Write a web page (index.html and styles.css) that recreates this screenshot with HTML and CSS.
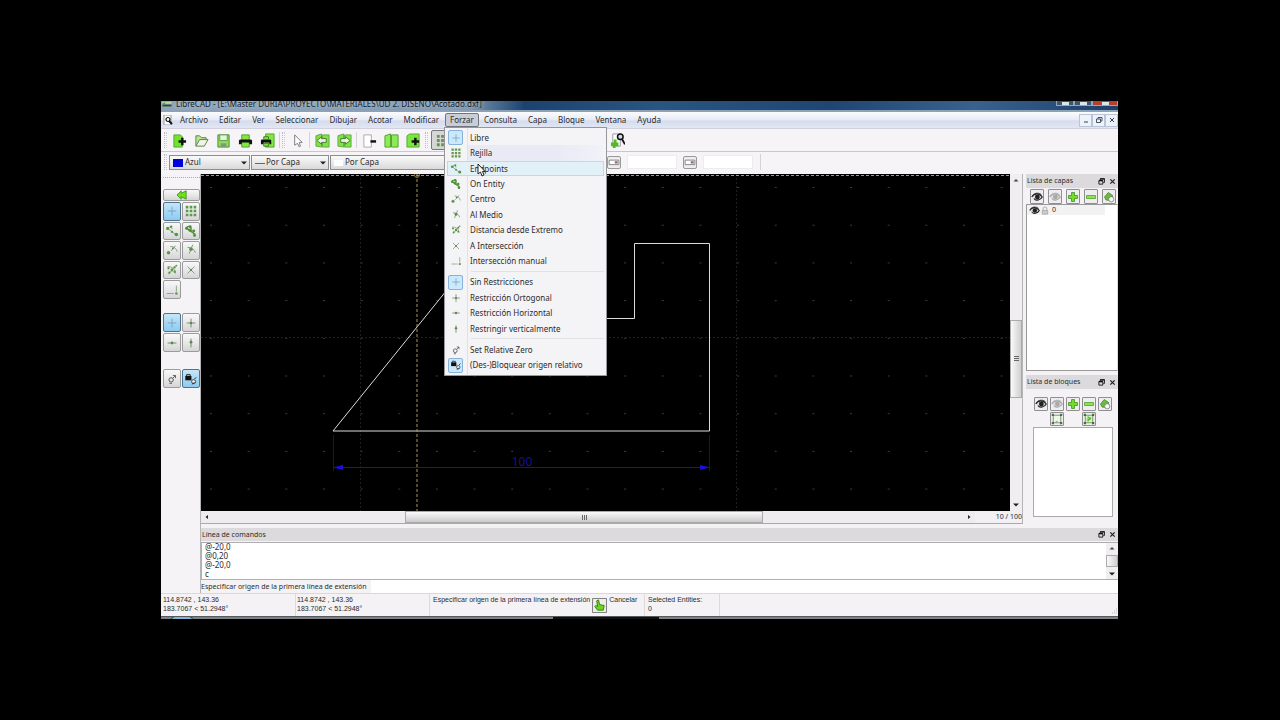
FILE: index.html
```html
<!DOCTYPE html>
<html lang="es">
<head>
<meta charset="utf-8">
<title>LibreCAD</title>
<link rel="stylesheet" href="styles.css">
</head>
<body>
<svg class="defs" aria-hidden="true">
  <symbol id="plus-blue" viewBox="0 0 16 16"><path d="M8 3v10M3 8h10" stroke="#6fa3c4" fill="none"/></symbol>
  <symbol id="grid" viewBox="0 0 16 16"><g fill="#5f9a4c"><path d="M2 2h3v3H2zM6.500 2h3v3h-3zM11 2h3v3h-3zM2 6.500h3v3H2zM6.500 6.500h3v3h-3zM11 6.500h3v3h-3zM2 11h3v3H2zM6.500 11h3v3h-3zM11 11h3v3h-3z"/></g></symbol>
  <symbol id="ends" viewBox="0 0 16 16"><path d="M3 5c3-3 5-1 5 1M3 5l9 7" stroke="#7d9a7a" fill="none"/><g fill="#4e9a3a"><circle cx="3" cy="5" r="1.800"/><circle cx="8" cy="9" r="1.300"/><circle cx="13" cy="12" r="2"/><circle cx="7" cy="3" r="1.400"/></g></symbol>
  <symbol id="entity" viewBox="0 0 16 16"><path d="M2 5c3-4 7-2 6 1M3 5l10 7" stroke="#5d7d55" stroke-width="1.500" fill="none"/><g fill="#4a9430"><circle cx="3" cy="5" r="1.700"/><circle cx="7" cy="7" r="1.900"/><circle cx="11" cy="8" r="1.700"/><circle cx="12" cy="13" r="1.700"/><circle cx="7" cy="3" r="1.700"/></g></symbol>
  <symbol id="center" viewBox="0 0 16 16"><path d="M6 4c5 0 7 3 8 6M7 9l5-6" stroke="#78936f" fill="none"/><circle cx="4" cy="11" r="2" fill="#5b9a43"/><circle cx="9" cy="6" r="1" fill="#557a48"/></symbol>
  <symbol id="middle" viewBox="0 0 16 16"><path d="M4 5c5 0 8 3 9 6M6 12l4-10" stroke="#72896b" fill="none"/><circle cx="8" cy="7" r="2" fill="#5b9444"/></symbol>
  <symbol id="dist" viewBox="0 0 16 16"><path d="M3 4c5 0 9 3 9 8M4 13l8-10" stroke="#809977" fill="none"/><g fill="#5b9444"><circle cx="4" cy="6" r="1.300"/><circle cx="8" cy="8" r="1.600"/><circle cx="5" cy="11" r="1.300"/><circle cx="11" cy="5" r="1.300"/><circle cx="11" cy="10" r="1.300"/><circle cx="13" cy="3" r="1"/></g></symbol>
  <symbol id="cross" viewBox="0 0 16 16"><path d="M4 4l8 8M12 4l-8 8" stroke="#80907b" fill="none"/><circle cx="8" cy="8" r="1.300" fill="#5b8a4a"/></symbol>
  <symbol id="manual" viewBox="0 0 16 16"><path d="M2 12h8M13 3v7" stroke="#8a9a86" fill="none"/><circle cx="13" cy="12" r="1.500" fill="#5f9a4c"/></symbol>
  <symbol id="ortho" viewBox="0 0 16 16"><path d="M8 3v10M3 8h10" stroke="#6c7f66" fill="none"/><circle cx="8" cy="8" r="1.400" fill="#5b8a4a"/></symbol>
  <symbol id="horiz" viewBox="0 0 16 16"><path d="M3 8h10" stroke="#6c7f66" fill="none"/><circle cx="8" cy="8" r="1.600" fill="#5b8a4a"/></symbol>
  <symbol id="vert" viewBox="0 0 16 16"><path d="M8 3v10" stroke="#6c7f66" fill="none"/><circle cx="8" cy="7" r="1.600" fill="#5b8a4a"/></symbol>
  <symbol id="zero" viewBox="0 0 16 16"><circle cx="7" cy="9" r="2.500" fill="none" stroke="#444"/><path d="M5 13h3M9 7l3-3M9 4h3v3" stroke="#555" fill="none"/></symbol>
  <symbol id="lock" viewBox="0 0 16 16"><path d="M3 5V3h4v2" stroke="#111" fill="none"/><path d="M1.500 4.500h7v5h-7z" fill="#111"/><circle cx="11" cy="11" r="2.300" fill="#e8f2f8" stroke="#333"/><path d="M12 8l2-2M9 14l3-2" stroke="#222"/></symbol>
  <symbol id="eye" viewBox="0 0 16 16"><path d="M1 8c3-5 10-6 14 0-2 4-9 6-11 2" fill="#ddd" stroke="currentColor" stroke-width="1.600"/><circle cx="8.500" cy="8" r="3.200" fill="currentColor"/><path d="M2 6c3-4 9-4 12-1" stroke="currentColor" fill="none"/></symbol>
  <symbol id="add" viewBox="0 0 16 16"><path d="M6 2h4v4h4v4h-4v4H6v-4H2V6h4z" fill="#74dd2c" stroke="#3d8b22"/></symbol>
  <symbol id="remove" viewBox="0 0 16 16"><path d="M2 6h12v4H2z" fill="#86e64a" stroke="#4f9a32"/></symbol>
  <symbol id="edit" viewBox="0 0 16 16"><path d="M2 8l5-6 6 4-2 7-7-1z" fill="#67bd3a" stroke="#4d7d3a"/><circle cx="11" cy="11" r="3.500" fill="#f6f6f6" stroke="#777"/></symbol>
  <symbol id="frame" viewBox="0 0 16 16"><path d="M3 3h10v10H3z" fill="#eef7e8" stroke="#557d4a"/><g fill="#4d6e43"><path d="M1 1h3v3H1zM12 1h3v3h-3zM1 12h3v3H1zM12 12h3v3h-3z"/></g><path d="M6 12l3-1" stroke="#777"/></symbol>
  <symbol id="frame-in" viewBox="0 0 16 16"><path d="M3 3h10v10H3z" fill="#d9f5c8" stroke="#557d4a"/><g fill="#3f7030"><path d="M1 1h3v3H1zM12 1h3v3h-3zM1 12h3v3H1zM12 12h3v3h-3z"/></g><path d="M5 8h6M6 5l4 2-4 4" stroke="#58b52b" stroke-width="1.600" fill="none"/></symbol>
  <symbol id="float" viewBox="0 0 8 8"><path d="M2.500 2.500V1h5v4H6M1 3h4.500v4H1z" fill="none" stroke="#111"/><path d="M1 3h4.500M2.500 1h5" stroke="#111" stroke-width="1.500"/></symbol>
  <symbol id="close" viewBox="0 0 8 8"><path d="M1.500 1.500l5 5M6.500 1.500l-5 5" stroke="#222" stroke-width="1.400"/></symbol>
  <symbol id="up" viewBox="0 0 8 8"><path d="M1.500 5.500L4 3l2.500 2.500z" fill="#444"/></symbol>
  <symbol id="down" viewBox="0 0 8 8"><path d="M1 2.500h6L4 5.500z" fill="#222"/></symbol>
  <symbol id="left" viewBox="0 0 8 8"><path d="M5 2v4L2.500 4z" fill="#222"/></symbol>
  <symbol id="right" viewBox="0 0 8 8"><path d="M3 2v4l2.500-2z" fill="#222"/></symbol>
  <symbol id="field" viewBox="0 0 16 16"><path d="M1.500 5.500h13v6h-13z" fill="#fff" stroke="#666"/><path d="M9 7h4v3H9z" fill="#9b6370"/></symbol>
</svg>

<div class="app">
  <header class="title">
    <svg class="logo" viewBox="0 0 12 10"><path d="M1 1h10v2H1z" fill="#b9df9f"/><path d="M1 4h10v2H1z" fill="#264d22"/><path d="M0 4l4-3v2z" fill="#4b9f2f"/></svg>
    <h1>LibreCAD - [E:\Master DURIA\PROYECTO\MATERIALES\UD 2. DISEÑO\Acotado.dxf]</h1>
    <div class="win"><button aria-label="Minimizar"><i></i></button><button aria-label="Maximizar"><i></i></button><button class="red" aria-label="Cerrar"><i></i></button></div>
  </header>

  <nav class="menubar">
    <svg class="doc" viewBox="0 0 10 10"><path d="M1 0h7v10H1z" fill="#fff" stroke="#999"/><circle cx="5" cy="4.500" r="2" fill="none" stroke="#111" stroke-width="1.200"/><path d="M6 6l3 3" stroke="#111" stroke-width="2"/></svg>
    <button>Archivo</button><button>Editar</button><button>Ver</button><button>Seleccionar</button><button>Dibujar</button><button>Acotar</button><button>Modificar</button>
    <div class="drop">
      <button class="open">Forzar</button>
      <div class="popup">
        <button><span class="on"><svg><use href="#plus-blue"/></svg></span>Libre</button>
        <button class="soft"><span><svg><use href="#grid"/></svg></span>Rejilla</button>
        <button class="hover"><span><svg><use href="#ends"/></svg></span>Endpoints</button>
        <button><span><svg><use href="#entity"/></svg></span>On Entity</button>
        <button><span><svg><use href="#center"/></svg></span>Centro</button>
        <button><span><svg><use href="#middle"/></svg></span>Al Medio</button>
        <button><span><svg><use href="#dist"/></svg></span>Distancia desde Extremo</button>
        <button><span><svg><use href="#cross"/></svg></span>A Intersección</button>
        <button><span><svg><use href="#manual"/></svg></span>Intersección manual</button>
        <hr>
        <button><span class="on"><svg><use href="#plus-blue"/></svg></span>Sin Restricciones</button>
        <button><span><svg><use href="#ortho"/></svg></span>Restricción Ortogonal</button>
        <button><span><svg><use href="#horiz"/></svg></span>Restricción Horizontal</button>
        <button><span><svg><use href="#vert"/></svg></span>Restringir verticalmente</button>
        <hr>
        <button><span><svg><use href="#zero"/></svg></span>Set Relative Zero</button>
        <button><span class="on"><svg><use href="#lock"/></svg></span>(Des-)Bloquear origen relativo</button>
        <svg class="cursor" viewBox="0 0 9 14"><path d="M1 1v10l2.500-2 1.500 4 2-1-1.500-3.500H8z" fill="#fff" stroke="#222"/></svg>
      </div>
    </div>
    <button>Consulta</button><button>Capa</button><button>Bloque</button><button>Ventana</button><button>Ayuda</button>
    <div class="mdi"><button aria-label="Minimizar documento"><svg viewBox="0 0 8 8"><path d="M2 6h4" stroke="#345"/></svg></button><button aria-label="Restaurar documento"><svg viewBox="0 0 8 8"><path d="M3 3V1.500h4V5H5.500M1.500 3h4v3.500h-4z" stroke="#456" fill="none"/></svg></button><button aria-label="Cerrar documento"><svg viewBox="0 0 8 8"><path d="M2 2l4 4M6 2L2 6" stroke="#345"/></svg></button></div>
  </nav>

  <div class="tools">
    <i class="handle"></i>
    <button aria-label="Nuevo"><svg viewBox="0 0 16 16"><path d="M2 2h7l2 2v11H2z" fill="#72e32b" stroke="#58a338"/><path d="M11 5v8M7 9h8" stroke="#111" stroke-width="2.600"/></svg></button>
    <button aria-label="Abrir"><svg viewBox="0 0 16 16"><path d="M2 14V3h4l2 2h5v3" fill="#b4e88f" stroke="#5c7d4b"/><path d="M2 14l4-7h9l-4 7z" fill="#eef5e8" stroke="#5c7d4b"/></svg></button>
    <button aria-label="Guardar"><svg viewBox="0 0 16 16"><path d="M2 2h12v13H2z" fill="#8fdc5d" stroke="#4d8c35"/><path d="M4 2h8v6H4z" fill="#e6f3df" stroke="#669a54"/><path d="M5 11h6v4H5z" fill="#7d9c73"/></svg></button>
    <button aria-label="Imprimir"><svg viewBox="0 0 16 16"><path d="M4 2h8v13H4z" fill="#83e743" stroke="#50a02e"/><path d="M1 8q0-1 2-1h10q2 0 2 1v4h-3v-2H4v2H1z" fill="#111"/></svg></button>
    <button aria-label="Vista previa"><svg viewBox="0 0 16 16"><path d="M6 1h9v14H6z" fill="#83e743" stroke="#50a02e"/><path d="M1 8q0-1 1-1h8q2 0 2 1v4h-2v-2H4v2H1z" fill="#111"/><path d="M4 4h5v3H4zM4 11h5v3H4z" fill="#83e743" stroke="#3d7a25"/></svg></button>
    <i class="sep"></i><i class="handle"></i>
    <button aria-label="Puntero"><svg viewBox="0 0 16 16"><path d="M5 2v11l3-2 2 4 1-1-1-4h3z" fill="#fff" stroke="#777"/></svg></button>
    <i class="sep"></i>
    <button aria-label="Deshacer"><svg viewBox="0 0 16 16"><path d="M1 3l6-2v14l-6-1zM8 2h7v13H8z" fill="#79e83a" stroke="#69a450"/><path d="M2 8l5-4v2h5v4H7v2z" fill="#e7f8dc" stroke="#467532"/></svg></button>
    <button aria-label="Rehacer"><svg viewBox="0 0 16 16"><path d="M1 3l6-2v14l-6-1zM8 2h7v13H8z" fill="#79e83a" stroke="#69a450"/><path d="M14 8L9 4v2H4v4h5v2z" fill="#e7f8dc" stroke="#467532"/></svg></button>
    <i class="sep"></i>
    <button aria-label="Cortar"><svg viewBox="0 0 16 16"><path d="M2 2h8v13H2z" fill="#fff" stroke="#aaa"/><path d="M9 9h6" stroke="#111" stroke-width="2.600"/></svg></button>
    <button aria-label="Copiar"><svg viewBox="0 0 16 16"><path d="M1 3l6-2v14H1zM8 2h7v13H8z" fill="#8bec51" stroke="#4f9c31"/></svg></button>
    <button aria-label="Pegar"><svg viewBox="0 0 16 16"><path d="M1 3l3-2h10v14H1z" fill="#79e83a" stroke="#58a33a"/><path d="M10 5v8M6 9h8" stroke="#111" stroke-width="2.600"/></svg></button>
    <i class="handle"></i>
    <button class="pressed" aria-label="Rejilla"><svg><use href="#grid"/></svg></button>
    <button class="zoomer" aria-label="Zoom"><svg viewBox="0 0 16 16"><path d="M3 1h8v13H3z" fill="#fff" stroke="#999"/><path d="M1 10h3V7h3v3h2v4H6v2H3v-2H1z" fill="#50bb24"/><circle cx="11" cy="4" r="3" fill="#cfdde2" stroke="#111" stroke-width="1.600"/><path d="M13 7l3 5" stroke="#111" stroke-width="2"/></svg></button>
  </div>

  <div class="tools props">
    <i class="handle"></i>
    <label class="pick color"><select aria-label="Color"><option>Azul</option></select><svg><use href="#down"/></svg></label>
    <label class="pick line"><select aria-label="Ancho"><option>Por Capa</option></select><svg><use href="#down"/></svg></label>
    <label class="pick type"><select aria-label="Tipo de línea"><option>Por Capa</option></select></label>
    <div class="fields">
      <button aria-label="Coordenada"><svg><use href="#field"/></svg></button><input aria-label="Coordenada absoluta">
      <button aria-label="Relativa"><svg><use href="#field"/></svg></button><input aria-label="Coordenada relativa">
      <i class="sep"></i>
    </div>
  </div>

  <main class="body">
    <aside class="palette">
      <i class="grip"></i>
      <button class="back" aria-label="Volver"><svg viewBox="0 0 16 12"><path d="M2 6l5-5v3l6-3v10L7 8v3z" fill="#6de31d" stroke="#3c8b1c"/></svg></button>
      <div class="pad five">
        <button class="sel" aria-label="Libre"><svg><use href="#plus-blue"/></svg></button><button aria-label="Rejilla"><svg><use href="#grid"/></svg></button>
        <button aria-label="Extremos"><svg><use href="#ends"/></svg></button><button aria-label="Entidad"><svg><use href="#entity"/></svg></button>
        <button aria-label="Centro"><svg><use href="#center"/></svg></button><button aria-label="Medio"><svg><use href="#middle"/></svg></button>
        <button aria-label="Distancia"><svg><use href="#dist"/></svg></button><button aria-label="Intersección"><svg><use href="#cross"/></svg></button>
        <button aria-label="Intersección manual"><svg><use href="#manual"/></svg></button>
      </div>
      <div class="pad two">
        <button class="sel" aria-label="Sin restricciones"><svg><use href="#plus-blue"/></svg></button><button aria-label="Ortogonal"><svg><use href="#ortho"/></svg></button>
        <button aria-label="Horizontal"><svg><use href="#horiz"/></svg></button><button aria-label="Vertical"><svg><use href="#vert"/></svg></button>
      </div>
      <div class="pad one">
        <button aria-label="Cero relativo"><svg><use href="#zero"/></svg></button><button class="sel" aria-label="Bloquear origen"><svg><use href="#lock"/></svg></button>
      </div>
    </aside>

    <div class="content">
      <div class="upper">
        <section class="view">
          <div class="sheet">
            <svg class="drawing">
              <defs><pattern id="dots" x="9" y="13" width="37.650" height="37.700" patternUnits="userSpaceOnUse"><path d="M0 .5h2" stroke="#3c3c3c"/></pattern></defs>
              <rect width="100%" height="100%" fill="#000"/>
              <rect width="100%" height="100%" fill="url(#dots)"/>
              <path d="M159.500 0v337M535.500 0v337M0 163.500h810" stroke="#1e1e1e" stroke-dasharray="2 2" fill="none"/>
              <path d="M132 257L283.500 69.500H358.500V144.500H433.500V69.500H508.500V257H132" fill="none" stroke="#dcdcdc"/>
              <g stroke="#1a0cc0" fill="none"><path d="M132.500 261v36M508.500 261v36" stroke="#140c80"/><path d="M132 293.500h377"/></g>
              <path d="M132 293.500l10-2.500v5zM509 293.500l-10-2.500v5z" fill="#1b0fe0"/>
              <text x="321" y="292" text-anchor="middle" class="dim">100</text>
              <line x1="0" y1="1.500" x2="100%" y2="1.500" stroke="#a59a68" stroke-dasharray="3 2"/>
              <path d="M216 0v337" stroke="#a8945c" stroke-dasharray="3 2"/>
              <circle cx="216" cy="1" r="2.500" fill="none" stroke="#a07818"/>
            </svg>
            <div class="vbar"><svg><use href="#up"/></svg><i class="s1"></i><i class="thumb"></i><i class="s2"></i><svg><use href="#down"/></svg></div>
          </div>
          <div class="foot">
            <div class="hbar"><svg><use href="#left"/></svg><i class="s1"></i><i class="thumb"></i><i class="s2"></i><svg><use href="#right"/></svg></div>
            <span>10 / 100</span>
          </div>
        </section>

        <aside class="docks">
          <h2>Lista de capas<button aria-label="Flotar"><svg><use href="#float"/></svg></button><button aria-label="Cerrar"><svg><use href="#close"/></svg></button></h2>
          <div class="acts wide">
            <button aria-label="Mostrar"><svg><use href="#eye"/></svg></button><button class="dim-eye" aria-label="Ocultar"><svg><use href="#eye"/></svg></button><button aria-label="Añadir"><svg><use href="#add"/></svg></button><button aria-label="Quitar"><svg><use href="#remove"/></svg></button><button aria-label="Editar"><svg><use href="#edit"/></svg></button>
          </div>
          <div class="layers"><div class="layer"><svg class="eye"><use href="#eye"/></svg><svg class="pad-lock" viewBox="0 0 8 10"><path d="M2 5V2q2-2 4 0v3" fill="none" stroke="#aaa"/><path d="M1 5h6v4H1z" fill="#ccc" stroke="#aaa"/></svg>0</div></div>
          <h2 class="second">Lista de bloques<button aria-label="Flotar"><svg><use href="#float"/></svg></button><button aria-label="Cerrar"><svg><use href="#close"/></svg></button></h2>
          <div class="acts tight">
            <button aria-label="Mostrar"><svg><use href="#eye"/></svg></button><button class="dim-eye" aria-label="Ocultar"><svg><use href="#eye"/></svg></button><button aria-label="Añadir"><svg><use href="#add"/></svg></button><button aria-label="Quitar"><svg><use href="#remove"/></svg></button><button aria-label="Editar"><svg><use href="#edit"/></svg></button>
          </div>
          <div class="acts pair"><button aria-label="Editar bloque"><svg><use href="#frame"/></svg></button><button aria-label="Insertar bloque"><svg><use href="#frame-in"/></svg></button></div>
          <div class="blocks"></div>
        </aside>
      </div>

      <section class="cmd">
        <h2>Línea de comandos<button aria-label="Flotar"><svg><use href="#float"/></svg></button><button aria-label="Cerrar"><svg><use href="#close"/></svg></button></h2>
        <div class="log">
          <div class="lines"><p>@-20,0</p><p>@0,20</p><p>@-20,0</p><p>c</p></div>
          <div class="vbar"><svg><use href="#up"/></svg><i class="thumb"></i><svg><use href="#down"/></svg></div>
        </div>
        <div class="prompt"><label for="cmd">Especificar origen de la primera línea de extensión</label><input id="cmd"></div>
      </section>
    </div>
  </main>

  <footer class="status">
    <div class="cell pos"><p>114.8742 , 143.36</p><p>183.7067 &lt; 51.2948°</p></div>
    <div class="cell pos"><p>114.8742 , 143.36</p><p>183.7067 &lt; 51.2948°</p></div>
    <div class="cell mouse"><p>Especificar origen de la primera línea de extensión</p><svg class="hand" viewBox="0 0 16 16"><path d="M.5.500h15v15H.5z" fill="#ececec" stroke="#777"/><path d="M5 3l2-1 1 5 5 1-1 5H6L3 9l1-1 2 1z" fill="#6ed51f" stroke="#397b17"/></svg><p>Cancelar</p></div>
    <div class="cell ents"><p>Selected Entities:</p><p>0</p></div>
    <svg class="size" viewBox="0 0 8 8"><path d="M6 1h1M4 3h1M6 3h1M2 5h1M4 5h1M6 5h1" stroke="#bbb"/></svg>
  </footer>
  <div class="taskbar"><i class="orb"></i><i class="dark"></i></div>
</div>
</body>
</html>
```
FILE: styles.css
```css
* { box-sizing: border-box; }
body {
  margin: 0;
  min-height: 100vh;
  padding: 101px 162px 101px 161px;
  display: flex;
  background: #000;
  color: #2c2c2c;
  font: 8px/10px "Noto Sans", "Open Sans", sans-serif;
}
.defs { position: absolute; width: 0; height: 0; }
button, input, select { font: inherit; color: inherit; margin: 0; padding: 0; border: 0; background: none; border-radius: 0; min-width: 0; }
button { display: flex; align-items: center; justify-content: center; white-space: nowrap; }
h1, h2, p { margin: 0; font-size: inherit; font-weight: normal; white-space: nowrap; }
svg { display: block; flex: none; }

.app { flex: 1; min-width: 0; display: flex; flex-direction: column; background: #f4f2f4; }

.title {
  height: 11px;
  display: flex;
  overflow: hidden;
  background: linear-gradient(90deg, #8ea3b8, #7c96af 32%, #1c4370 38%, #2a5581 52%, #1f4672 70%, #38628c 85%, #1c416a);
  border-bottom: 2px solid #8da2b8;
}
.logo { width: 12px; height: 9px; margin-right: 3px; }
.title h1 { line-height: 6px; height: 8px; color: #141c26; text-shadow: 0 0 4px #dbe4ec; }
.win { margin-left: auto; display: flex; height: 5px; }
.win button { width: 18px; background: #40566e; border: 1px solid #93a5b6; border-top: 0; }
.win .red { width: 26px; background: #b7402c; }
.win i { width: 7px; height: 3px; background: #dde5ec; }

.menubar {
  height: 17px;
  padding-left: 2px;
  display: flex;
  align-items: center;
  background: linear-gradient(#fbfcfe, #e6eaf5 50%, #d6dcee 55%, #e2e6f4);
  border-bottom: 1px solid #cfd2de;
}
.doc { width: 10px; height: 10px; margin-right: 2px; }
.menubar > button { height: 14px; padding: 0 6px 0 5px; }
.open { height: 14px; border: 1px solid #70757f; border-radius: 2px; background: #c9cdd8; padding: 0 4px; }
.drop { position: relative; }
.mdi { margin-left: auto; display: flex; }
.mdi button { width: 13px; height: 13px; border: 1px solid #b9c4d8; background: #eef2fa; }
.mdi svg { width: 8px; height: 8px; }

.popup {
  position: absolute;
  z-index: 5;
  top: 14px;
  left: -1px;
  width: 163px;
  height: 249px;
  padding: 2px;
  display: flex;
  flex-direction: column;
  background: linear-gradient(90deg, transparent 22px, #e2e2e4 22px, #e2e2e4 23px, transparent 23px), #f4f3f5;
  border: 1px solid #97979b;
}
.popup button { flex: 1; min-height: 0; justify-content: flex-start; gap: 7px; width: 100%; border: 1px solid transparent; }
.popup span { width: 15px; height: 15px; margin: -1px 0; display: flex; align-items: center; justify-content: center; }
.popup span svg { width: 12px; height: 12px; }
.popup .on { background: #cce8fb; border: 1px solid #86b2dc; border-radius: 2px; }
.popup .soft { background: linear-gradient(90deg, transparent 20px, #e8ebf6 20px, #e8ebf6 70%, #f1f2f8); }
.popup .hover { background: #e2f0f7; border-color: #b9dcea; }
.popup hr { flex: none; height: 6px; margin: 0 0 0 24px; border: 0; background: linear-gradient(transparent 2px, #e2e2e4 2px, #e2e2e4 3px, transparent 3px); }
.cursor { position: absolute; left: 32px; top: 35px; width: 9px; height: 14px; }

.tools {
  height: 23px;
  padding-left: 2px;
  display: flex;
  align-items: center;
  background: #f6f4f6;
  border-bottom: 1px solid #c9c7ca;
}
.tools > button { width: 22px; height: 20px; }
.tools > button svg { width: 15px; height: 15px; }
.handle { width: 3px; height: 16px; margin: 0 1px; border-left: 1px dotted #bbb; border-right: 1px dotted #ccc; }
.sep { width: 1px; height: 16px; background: #d4d4d6; margin: 0 1px; }
.tools > .pressed { border: 1px solid #777; border-radius: 2px; background: #d6d6d6; margin-left: 2px; }
.tools > .zoomer { margin-left: 153px; }

.props { height: 22px; border-bottom: 0; gap: 1px; padding-bottom: 2px; }
.pick { position: relative; height: 15px; }
.pick select {
  appearance: none;
  width: 100%;
  height: 15px;
  border: 1px solid #8d8d90;
  background: linear-gradient(#fafafa, #e9e9e9 50%, #dadada);
}
.pick svg { position: absolute; right: 2px; top: 4px; width: 8px; height: 8px; }
.color { width: 81px; }
.line { width: 78px; }
.type { width: 120px; }
.color select { padding-left: 15px; background: linear-gradient(#00d, #00d) 3px 3px / 10px 8px no-repeat, linear-gradient(#fafafa, #e9e9e9 50%, #dadada); }
.line select { padding-left: 14px; background: linear-gradient(#666, #666) 3px 7px / 10px 1px no-repeat, linear-gradient(#fafafa, #e9e9e9 50%, #dadada); }
.type select { padding-left: 14px; background: linear-gradient(#fff, #fff) 3px 4px / 9px 6px no-repeat, linear-gradient(#fafafa, #e9e9e9 50%, #dadada); }
.fields { margin-left: 156px; display: flex; align-items: center; gap: 6px; }
.fields button { width: 14px; height: 13px; border: 1px solid #999; border-radius: 2px; background: #eee; }
.fields button svg { width: 12px; height: 12px; }
.fields input { width: 50px; height: 14px; background: #fff; border: 1px solid #ecebee; }

.body { flex: 1; display: flex; min-height: 0; }
.palette { width: 40px; padding: 3px 0 0 2px; border-right: 1px solid #b5b5b8; background: #f5f3f5; }
.palette button { border: 1px solid #9b9b9d; border-radius: 2px; background: linear-gradient(#f8f8f8, #e8e8e8 50%, #d5d5d5); }
.palette button svg { width: 14px; height: 14px; }
.grip { display: block; height: 2px; border-top: 1px dotted #aaa; }
.palette .back { width: 37px; height: 12px; margin: 10px 0 1px; }
.palette .back svg { width: 14px; height: 10px; }
.palette .sel { background: linear-gradient(#c6e5f8, #8ecaef); border-color: #4d7591; }
.pad { display: grid; grid-template-columns: 1fr 1fr; grid-auto-rows: 1fr; gap: 1px; }
.five { height: 97px; }
.two { height: 39px; margin-top: 14px; }
.one { height: 19px; margin-top: 17px; }

.content { flex: 1; min-width: 0; display: flex; flex-direction: column; }
.upper { flex: 1; display: flex; min-height: 0; }
.view { flex: 1; min-width: 0; display: flex; flex-direction: column; border-bottom: 1px solid #aaa; border-right: 1px solid #b5b5b8; }
.sheet { flex: 1; min-height: 0; display: flex; background: #000; }
.drawing { flex: 1; min-width: 0; height: 100%; }
.dim { font: 12px "Open Sans", sans-serif; fill: #1a10a0; }
.vbar { width: 12px; display: flex; flex-direction: column; align-items: center; background: #f0eef0; padding: 2px 0; }
.vbar svg, .hbar svg { width: 8px; height: 8px; }
.thumb { border: 1px solid #aaa; }
.vbar .thumb { width: 100%; flex: 77; background: repeating-linear-gradient(#666 0 1px, transparent 1px 2px) center / 5px 5px no-repeat, linear-gradient(90deg, #fafafa, #cfcfcf); }
.vbar .s1 { flex: 136; }
.vbar .s2 { flex: 103; }
.foot { height: 12px; display: flex; align-items: center; background: #f2f0f2; }
.hbar { flex: 1; display: flex; height: 12px; align-items: center; padding: 0 2px; background: #eeecee; }
.hbar .thumb { height: 12px; flex: 357; background: repeating-linear-gradient(90deg, #666 0 1px, transparent 1px 2px) center / 5px 5px no-repeat, linear-gradient(#fafafa, #cbcbcb); }
.hbar .s1 { flex: 194; }
.hbar .s2 { flex: 202; }
.foot span { width: 47px; text-align: right; font-size: 7px; white-space: nowrap; }

h2 { display: flex; align-items: center; height: 14px; padding-left: 1px; background: #dcdadc; }
h2 button { width: 11px; height: 11px; }
h2 button:first-of-type { margin-left: auto; }
h2 svg { width: 7px; height: 7px; }

.docks { width: 95px; padding: 0 0 7px 3px; display: flex; flex-direction: column; font-size: 7px; }
.acts { display: flex; }
.acts button { width: 14px; height: 14px; border: 1px solid #8f8f91; border-radius: 1px; background: #efedef; }
.acts svg { width: 12px; height: 12px; color: #222; }
.acts .dim-eye svg { color: #aaa; }
.wide { padding: 1px 2px; gap: 4px; margin-left: 2px; }
.wide button { height: 15px; }
.layers { flex: 1; min-height: 40px; margin-top: -1px; background: #fff; border: 1px solid #999; border-right-color: #ddd; }
.layer { display: flex; align-items: center; width: 78px; height: 10px; gap: 1px; padding-left: 2px; background: #f2f2f2; }
.eye { width: 11px; height: 11px; color: #222; }
.pad-lock { width: 8px; height: 9px; margin-right: 2px; }
.second { margin-top: 4px; }
.tight { justify-content: center; gap: 2px; margin: 8px 0 0 2px; }
.pair { justify-content: center; gap: 18px; margin: 1px 0 1px 2px; }
.blocks { height: 90px; margin: 0 5px 0 7px; background: #fff; border: 1px solid #aaa; }

.cmd { padding-top: 4px; }
.cmd h2 { height: 13px; font-size: 7px; }
.log { display: flex; height: 38px; background: #fff; border: 1px solid #b0aeb0; border-right: 0; margin-top: 1px; }
.lines { flex: 1; padding: 0 3px; line-height: 9px; margin-top: -1px; }
.log .vbar { padding: 1px 0; gap: 3px; }
.log .vbar .thumb { background: linear-gradient(90deg, #fafafa, #cfcfcf); }
.prompt { display: flex; height: 13px; background: #fff; align-items: center; font-size: 7px; }
.prompt label { padding-right: 4px; background: #f4f2f4; white-space: nowrap; line-height: 13px; }
.prompt input { flex: 1; height: 13px; outline: 0; }

.status {
  height: 23px;
  display: flex;
  padding-left: 1px;
  border-top: 1px solid #dad8da;
  font: 7px/9px "Liberation Sans", Arial, sans-serif;
}
.cell { padding: 1px 1px; border-right: 1px solid #dcdadc; }
.pos { width: 134px; }
.mouse { width: 215px; padding-left: 3px; display: flex; gap: 2px; }
.hand { width: 15px; height: 15px; margin-top: 3px; }
.ents { width: 75px; padding-left: 3px; }
.size { width: 8px; height: 8px; margin: auto 0 0 auto; }
.taskbar { position: relative; height: 3px; overflow: hidden; background: #7d8286; border-top: 1px solid #55595c; }
.orb { position: absolute; left: 10px; top: -2px; width: 22px; height: 8px; border-radius: 50%; background: #85b3d3; border: 1px solid #294a60; }
.dark { position: absolute; left: 41%; top: 0; width: 11%; height: 3px; background: #111; }
```
